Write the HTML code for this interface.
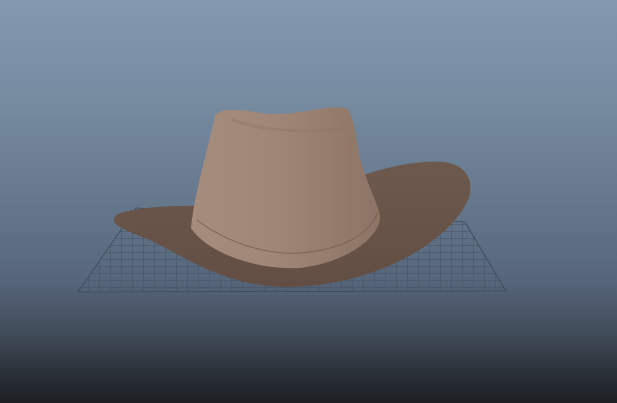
<!DOCTYPE html>
<html><head><style>
html,body{margin:0;padding:0;width:617px;height:403px;overflow:hidden}
body{background:linear-gradient(#8499b0 0%,#768aa0 25%,#66788c 50%,#56657a 70%,#434e5c 82%,#2d333b 92%,#1c1f24 100%)}
svg{position:absolute;left:0;top:0}
</style></head><body>
<svg width="617" height="403" viewBox="0 0 617 403">
<defs>
<pattern id="g" width="11" height="7" patternUnits="userSpaceOnUse">
<path d="M0 0H11M0 0V7" stroke="#3a4a5b" stroke-width="0.7" fill="none"/>
</pattern>
<linearGradient id="crown" x1="0" x2="1">
<stop offset="0" stop-color="#a58d7e"/><stop offset="0.45" stop-color="#9f8676"/><stop offset="1" stop-color="#8c7466"/>
</linearGradient>
<linearGradient id="brim" x1="0" y1="0" x2="0" y2="1">
<stop offset="0" stop-color="#6d594d"/><stop offset="1" stop-color="#624e43"/>
</linearGradient>
</defs>
<polygon points="136,208 465,222 506,291 78,292" fill="url(#g)" stroke="#3a4a5b" stroke-width="0.8"/>
<path d="M114,218 C118,208 170,205 200,206 L350,180 C390,165 420,160 445,162 C470,166 474,185 468,200 C450,240 380,285 290,287 C230,288 190,260 150,240 C125,230 112,226 114,218 Z" fill="url(#brim)"/>
<path d="M215,115 C225,105 250,112 270,114 C300,115 330,104 345,108 C355,112 355,140 362,165 C370,190 378,205 380,215 C382,235 350,262 300,268 C250,270 205,250 191,228 C195,190 208,150 215,115 Z" fill="url(#crown)"/>
<path d="M232,120 C260,130 300,134 345,128" stroke="#8f7667" stroke-width="3" fill="none" opacity="0.5"/>
<path d="M197,220 C230,245 270,255 300,253 C340,250 370,235 378,212" stroke="#7d6557" stroke-width="1" fill="none"/>
</svg>
</body></html>
